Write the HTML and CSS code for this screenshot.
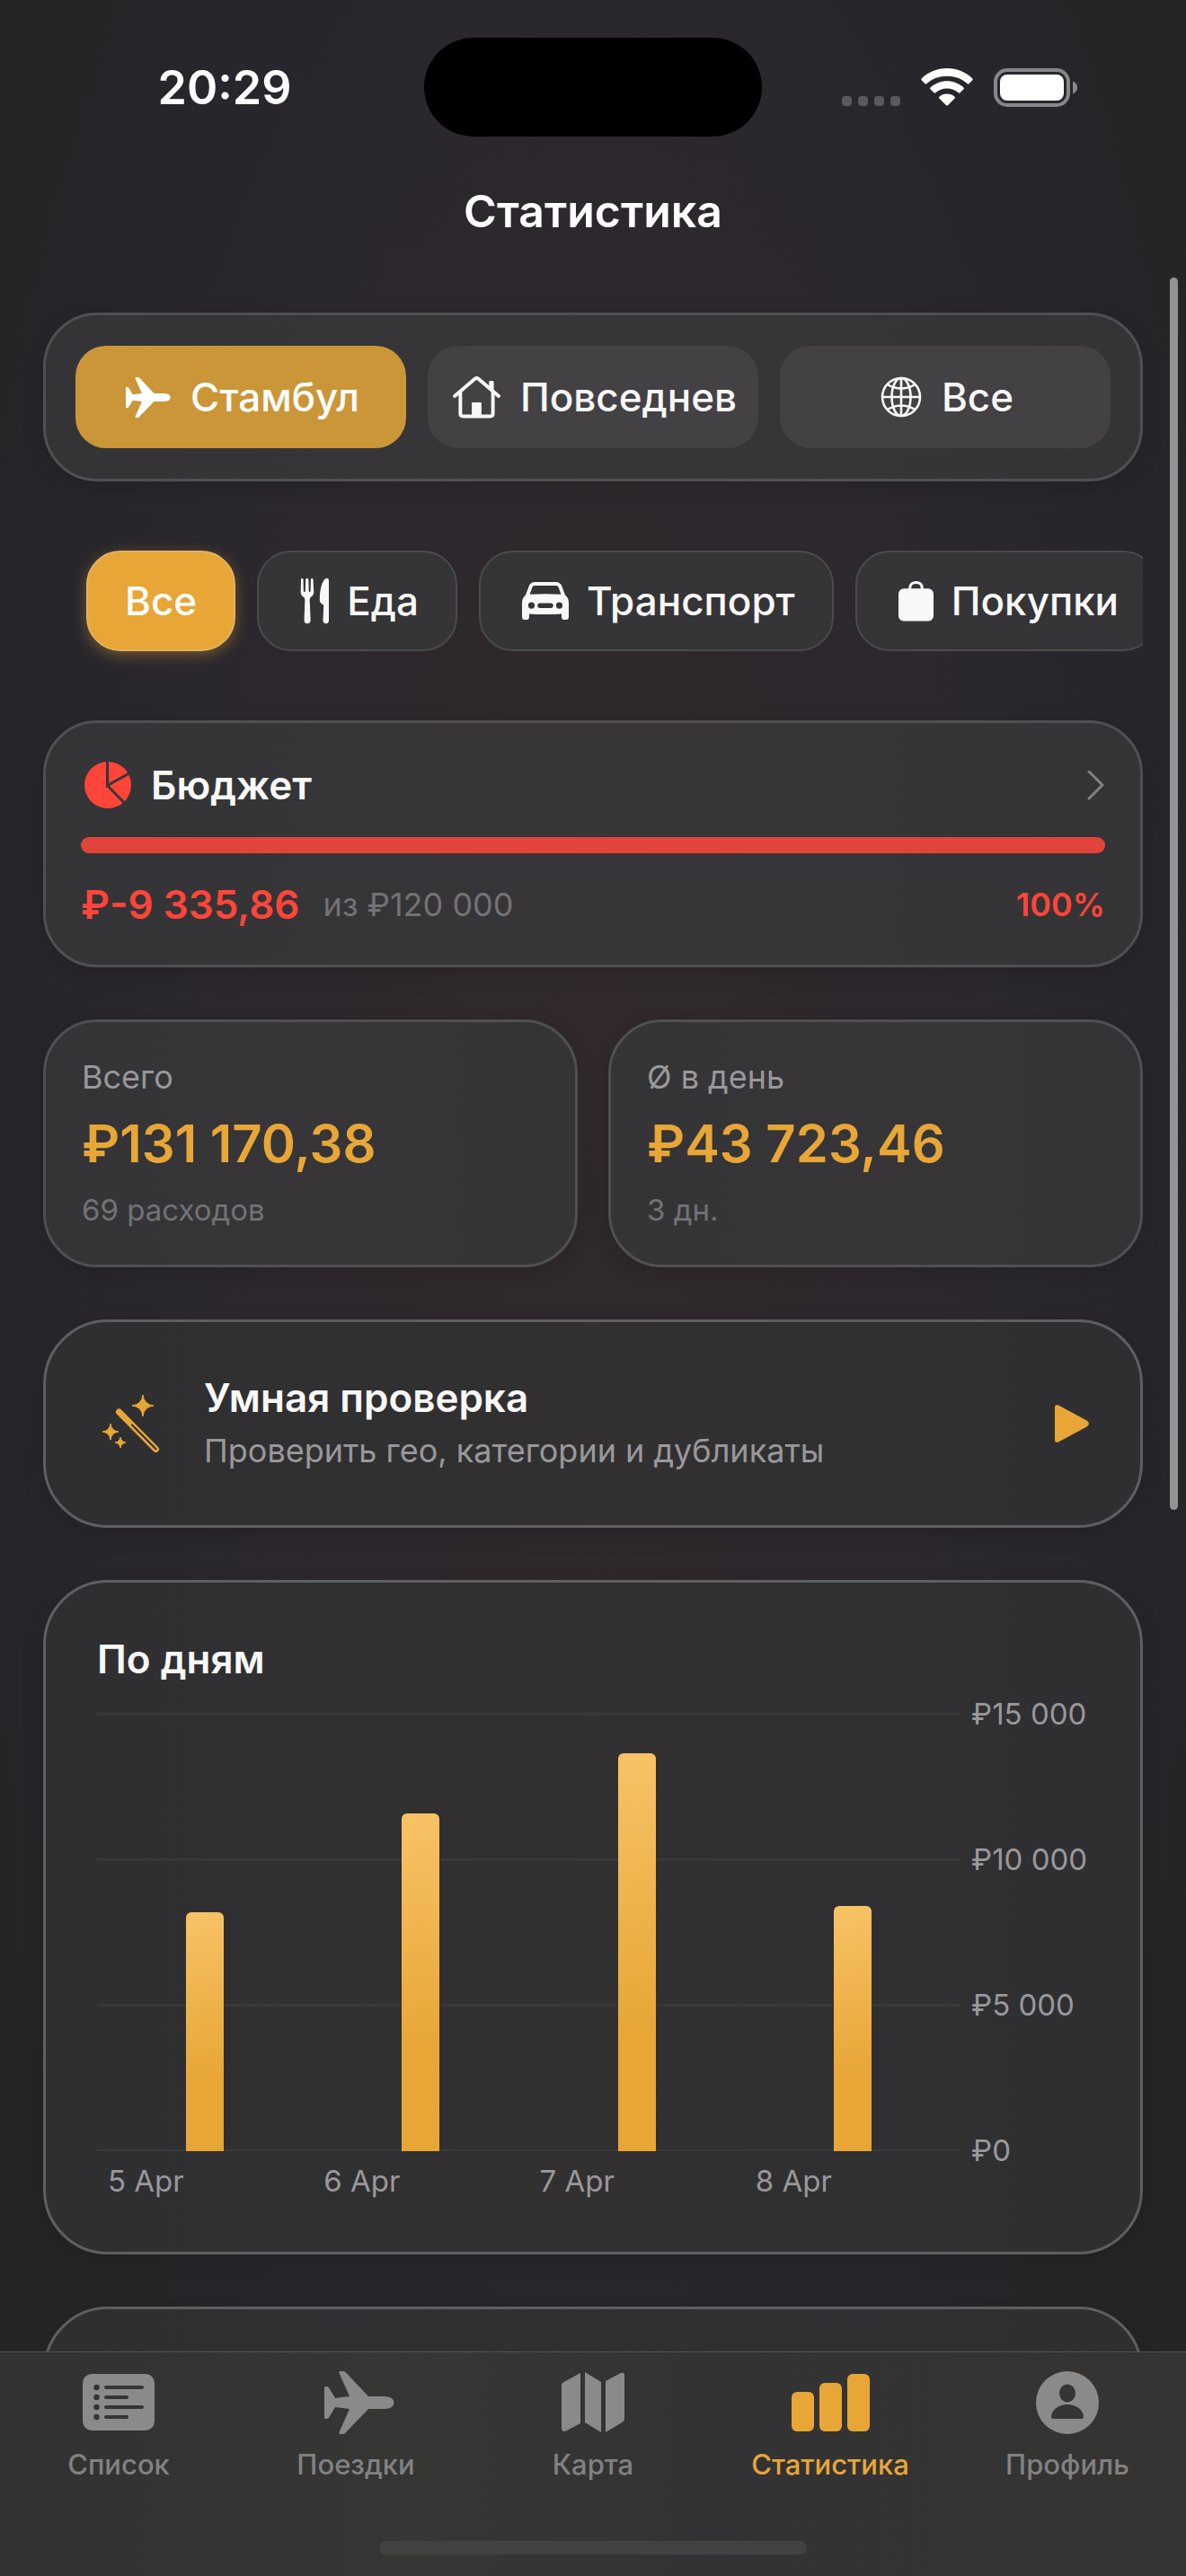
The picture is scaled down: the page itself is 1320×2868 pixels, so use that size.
FILE: index.html
```
<!DOCTYPE html>
<html lang="ru">
<head>
  <meta charset="UTF-8">
  <meta name="viewport" content="width=device-width, initial-scale=1">
  <title>Статистика</title>
  <link rel="stylesheet" href="styles.css">
</head>
<body>

  <!-- Status bar -->
  <div class="status-bar">
    <span class="time">20:29</span>
    <div class="island"></div>
    <div class="status-icons">
      <svg width="65" height="42" viewBox="0 0 65 42" fill="#5b595d">
        <rect x="0" y="31" width="11" height="11" rx="4"/>
        <rect x="18" y="31" width="11" height="11" rx="4"/>
        <rect x="36" y="31" width="11" height="11" rx="4"/>
        <rect x="54" y="31" width="11" height="11" rx="4"/>
      </svg>
      <svg width="58" height="42" viewBox="0 0 58 42" fill="#fff">
        <path d="M29 0C40 0 50 4.300 57.300 11.400Q58.200 12.300 57.300 13.200L53.400 17.200Q52.600 18 51.700 17.200C45.500 11.500 37.600 8.700 29 8.700S12.500 11.500 6.300 17.200Q5.400 18 4.600 17.200L.7 13.200Q-.2 12.300.7 11.400C8 4.300 18 0 29 0Z"/>
        <path d="M29 14.300C36 14.300 42.500 16.900 47.500 21.500Q48.400 22.400 47.500 23.300L43.500 27.300Q42.700 28.100 41.800 27.300C38.200 24.200 33.700 22.600 29 22.600S19.800 24.200 16.200 27.300Q15.300 28.100 14.500 27.300L10.500 23.300Q9.600 22.400 10.500 21.500C15.500 16.900 22 14.300 29 14.300Z"/>
        <path d="M29 28.500C32.300 28.500 35.300 29.700 37.600 31.700Q38.500 32.500 37.600 33.400L29.900 41.200Q29 42 28.100 41.200L20.400 33.400Q19.500 32.500 20.400 31.700C22.700 29.700 25.700 28.500 29 28.500Z"/>
      </svg>
      <svg width="93" height="43" viewBox="0 0 93 43">
        <rect x="2" y="2" width="81" height="39" rx="13" fill="none" stroke="#87868a" stroke-width="4"/>
        <rect x="7" y="7" width="71" height="29" rx="8" fill="#fff"/>
        <path d="M88 14.500c7 2.500 7 11.500 0 14z" fill="#87868a"/>
      </svg>
    </div>
  </div>

  <header class="nav-title">
    <h1>Статистика</h1>
  </header>

  <main class="content">

    <!-- Trip switcher -->
    <div class="card segments">
      <button type="button" class="segment active">
        <svg width="50" height="45" viewBox="0 0 78 70" fill="currentColor"><use href="#plane"/></svg>
        <span>Стамбул</span>
      </button>
      <button type="button" class="segment">
        <svg width="53" height="47" viewBox="0 0 54 48" fill="none" stroke="currentColor" stroke-width="4" stroke-linecap="round" stroke-linejoin="round">
          <path d="M2 22.500L25 2.800Q27 1.300 29 2.800L52 22.500"/>
          <path d="M8.500 18V42.500Q8.500 45.500 11.500 45.500H42.500Q45.500 45.500 45.500 42.500V18"/>
          <path d="M41 6.500Q41 5 42.500 5H45Q46.500 5 46.500 6.500V17L41 12.500ZM21.500 30.500Q21.500 29.500 22.500 29.500H31.500Q32.500 29.500 32.500 30.500V45H21.500Z" fill="currentColor" stroke="none"/>
        </svg>
        <span>Повседнев</span>
      </button>
      <button type="button" class="segment">
        <svg width="46" height="46" viewBox="0 0 46 46" fill="none" stroke="currentColor" stroke-width="2.600">
          <circle cx="23" cy="23" r="21"/>
          <ellipse cx="23" cy="23" rx="10.500" ry="21"/>
          <path d="M23 2V44M2 23H44M7.500 9Q23 18 38.500 9M7.500 37Q23 28 38.500 37"/>
        </svg>
        <span>Все</span>
      </button>
    </div>

    <!-- Category filter -->
    <div class="chips">
      <button type="button" class="chip active"><span>Все</span></button>
      <button type="button" class="chip">
        <svg width="32" height="52" viewBox="0 0 33 52" fill="currentColor">
          <path d="M1 2Q1-.2 2.300 0 3.600.2 3.700 2L4 14.500Q4 16 5 16T6 14.500L6.300 2Q6.500 0 8 0T9.700 2L10 14.500Q10 16 11 16T12 14.500L12.300 2Q12.400.2 13.700 0 15 0 15 2L15.700 15.500Q16 19 13 21.200 11 22.500 11 24.500L12 48Q12 52 8.300 52T4.700 48L5.500 24.500Q5.500 22.500 3.500 21.200.4 19 .7 15.500Z"/>
          <path d="M30.500 0Q33 0 33 2.500V48.500Q33 52 29.700 52T26.300 48.500L27 31.500Q27 30.500 26 30 22.500 28.500 22.500 25C22.500 13 25 4 29 .6Q29.700 0 30.500 0Z"/>
        </svg>
        <span>Еда</span>
      </button>
      <button type="button" class="chip">
        <svg width="52" height="42" viewBox="0 0 52 42" fill="currentColor" fill-rule="evenodd">
          <path d="M14.500 0H37.500Q42.500 0 44.300 4.500L48 14.500Q52 17.500 52 23V38.500Q52 42 49 42H47Q44 42 44 38.500V35.500Q26 36.500 8 35.500V38.500Q8 42 5 42H3Q0 42 0 38.500V23Q0 17.500 4 14.500L7.700 4.500Q9.500 0 14.500 0ZM14 4Q12 4 11.300 6L8.600 13.800Q26 12.800 43.400 13.800L40.700 6Q40 4 38 4ZM10.500 22.500a3.600 3.600 0 1 0 0 7.200a3.600 3.600 0 1 0 0-7.200ZM41.500 22.500a3.600 3.600 0 1 0 0 7.200a3.600 3.600 0 1 0 0-7.200ZM20 23.500a2.700 2.700 0 0 0 0 5.400H32a2.700 2.700 0 0 0 0-5.400Z"/>
        </svg>
        <span>Транспорт</span>
      </button>
      <button type="button" class="chip">
        <svg width="39" height="46" viewBox="0 0 40 46">
          <rect x="0" y="9" width="40" height="37" rx="6" fill="currentColor"/>
          <path d="M13 11V9Q13 2 20 2T27 9V11" fill="none" stroke="currentColor" stroke-width="3"/>
        </svg>
        <span>Покупки</span>
      </button>
    </div>

    <!-- Budget -->
    <section class="card budget">
      <div class="budget-head">
        <svg width="52" height="52" viewBox="0 0 52 52">
          <circle cx="26" cy="26" r="26" fill="#ff453a"/>
          <path d="M25.500 0V26.500L49 13.500M25.500 26.500L45 46.500" fill="none" stroke="#363538" stroke-width="3"/>
        </svg>
        <h2>Бюджет</h2>
        <svg class="chevron" width="20" height="34" viewBox="0 0 20 34" fill="none" stroke="#828184" stroke-width="3" stroke-linecap="round" stroke-linejoin="round">
          <path d="M2 2L17 17L2 32"/>
        </svg>
      </div>
      <div class="progress"><div class="progress-fill" style="width: 100%"></div></div>
      <div class="budget-foot">
        <strong class="left">₽-9 335,86</strong>
        <span class="total">из ₽120 000</span>
        <strong class="percent">100%</strong>
      </div>
    </section>

    <!-- Totals -->
    <div class="totals">
      <section class="card total-card">
        <p class="label">Всего</p>
        <p class="amount">₽131 170,38</p>
        <p class="note">69 расходов</p>
      </section>
      <section class="card total-card">
        <p class="label">Ø в день</p>
        <p class="amount">₽43 723,46</p>
        <p class="note">3 дн.</p>
      </section>
    </div>

    <!-- Smart check -->
    <button type="button" class="card large smart">
      <svg width="64" height="64" viewBox="0 0 64 64" fill="#e7a636">
        <path d="M45 0Q46.200 10.800 57 12 46.200 13.200 45 24 43.800 13.200 33 12 43.800 10.800 45 0Z" stroke="#e7a636" stroke-linejoin="round"/>
        <path d="M9 32Q10 40 18 41 10 42 9 50 8 42 0 41 8 40 9 32Z" stroke="#e7a636" stroke-linejoin="round"/>
        <path d="M20 47Q20.800 52.200 26 53 20.800 53.800 20 59 19.200 53.800 14 53 19.200 52.200 20 47Z" stroke="#e7a636"/>
        <path d="M18.500 19L59.500 60.500" stroke="#e7a636" stroke-width="7" stroke-linecap="round"/>
        <path d="M33 33.500L59.500 60.300" stroke="#302f31" stroke-width="2" stroke-linecap="round"/>
      </svg>
      <span class="smart-text">
        <span class="smart-title">Умная проверка</span>
        <span class="smart-sub">Проверить гео, категории и дубликаты</span>
      </span>
      <svg width="38" height="42" viewBox="0 0 38 42" fill="#e7a636">
        <path d="M0 3Q0-1 4 .6L35.500 17.500Q40.500 21 35.500 24.500L4 41.400Q0 43 0 39Z"/>
      </svg>
    </button>

    <!-- Daily chart -->
    <section class="card large chart-card">
      <h2>По дням</h2>
      <div class="chart">
        <div class="plot">
          <div class="day"><div class="bar" style="height: 54.500%"></div></div>
          <div class="day"><div class="bar" style="height: 77%"></div></div>
          <div class="day"><div class="bar" style="height: 90.700%"></div></div>
          <div class="day"><div class="bar" style="height: 56%"></div></div>
        </div>
        <div class="y-axis">
          <span>₽15 000</span>
          <span>₽10 000</span>
          <span>₽5 000</span>
          <span>₽0</span>
        </div>
        <div class="x-axis">
          <span>5 Apr</span>
          <span>6 Apr</span>
          <span>7 Apr</span>
          <span>8 Apr</span>
        </div>
      </div>
    </section>

    <section class="card large next-card"></section>

    <div class="scroll-thumb"></div>
  </main>

  <!-- Tab bar -->
  <nav class="tab-bar">
    <a href="#list" class="tab">
      <svg width="80" height="70" viewBox="0 0 80 70">
        <rect x="0" y="3" width="80" height="63" rx="10" fill="currentColor"/>
        <g stroke="#363434" stroke-width="4" stroke-linecap="round">
          <path d="M26 18H66M26 29H49M26 40H66M26 51H49"/>
          <path d="M15.500 18V18.100M15.500 29V29.100M15.500 40V40.100M15.500 51V51.100" stroke-width="6.500"/>
        </g>
      </svg>
      <span>Список</span>
    </a>
    <a href="#trips" class="tab">
      <svg width="86" height="70" viewBox="-8 0 86 70" fill="currentColor">
        <path id="plane" d="M17 0H21Q23 0 24.500 2L49 28H67Q77.500 28.500 77.500 35T67 42H49L24.500 67.500Q23 70 21 70H17.500Q16 70 16.500 68L28 42L12 40L5.500 51Q4.500 53 2.500 53H1Q0 53 0 51.500V18.500Q0 17 1 17H2.500Q4.500 17 5.500 19L12 30L28 28L16.500 2Q16 0 17 0Z"/>
      </svg>
      <span>Поездки</span>
    </a>
    <a href="#map" class="tab">
      <svg width="72" height="70" viewBox="0 0 72 70" fill="currentColor">
        <path d="M22 2V58L6 66.500Q1 68 1 63.500V16Q1 13.500 3.500 12Z"/>
        <path d="M27 1L45 12V68L27 57Z"/>
        <path d="M50 11L66 2.500Q71 0 71 5V53Q71 55 69 56.500L50 68Z"/>
      </svg>
      <span>Карта</span>
    </a>
    <a href="#stats" class="tab active">
      <svg width="87" height="70" viewBox="0 0 87 70" fill="currentColor">
        <rect x="0" y="23" width="25" height="44" rx="6"/>
        <rect x="31" y="13" width="25" height="54" rx="6"/>
        <rect x="62" y="3" width="25" height="64" rx="6"/>
      </svg>
      <span>Статистика</span>
    </a>
    <a href="#profile" class="tab">
      <svg width="70" height="70" viewBox="0 0 70 70">
        <circle cx="35" cy="35" r="35" fill="currentColor"/>
        <ellipse cx="35" cy="24.500" rx="9" ry="10" fill="#363434"/>
        <path d="M19.500 53Q17 53 17 51C17 43.500 25 37 35 37S53 43.500 53 51Q53 53 50.500 53Z" fill="#363434"/>
      </svg>
      <span>Профиль</span>
    </a>
    <div class="home-indicator"></div>
  </nav>

</body>
</html>
```
FILE: styles.css
```
* {
  box-sizing: border-box;
}

body {
  margin: 0;
  height: 100vh;
  display: flex;
  flex-direction: column;
  font-family: Inter, "Liberation Sans", sans-serif;
  color: #f8f8f8;
  background: radial-gradient(ellipse 58% 66% at 50% 42%, #31292c 0%, #2d282e 45%, #27262c 82%, #252426 100%);
}

h1, h2, p {
  margin: 0;
}

button {
  font-family: inherit;
  color: inherit;
  border: none;
  cursor: pointer;
}

svg {
  flex: none;
}

/* Status bar */
.status-bar {
  display: grid;
  grid-template-columns: 1fr 376px 1fr;
  align-items: center;
  padding-top: 42px;
}

.time {
  padding-left: 28px;
  text-align: center;
  font-size: 52px;
  font-weight: 600;
  color: #fff;
}

.island {
  height: 110px;
  border-radius: 55px;
  background: #000;
}

.status-icons {
  display: flex;
  justify-content: center;
  gap: 23px;
  padding-right: 32px;
}

.nav-title {
  padding: 50px 0 41px;
  text-align: center;
}

h1 {
  font-size: 50px;
  line-height: 66px;
  font-weight: 600;
  color: #fff;
}

/* Content */
.content {
  position: relative;
  flex: 1;
  min-height: 0;
  overflow: hidden;
  display: flex;
  flex-direction: column;
  gap: 58px;
  padding: 39px 48px 0;
}

.content > * {
  flex: none;
}

.card {
  border: 3px solid #504f52;
  border-radius: 60px;
  background: linear-gradient(90deg, #343436, #373538 50%, #343436);
  box-shadow: 0 6px 24px rgba(0, 0, 0, 0.15);
}

.card.large {
  border-color: #5f5e61;
  border-radius: 72px;
  background: linear-gradient(90deg, #2f2f31, #323031 50%, #2f2f31);
}

h2 {
  font-size: 44px;
  line-height: 56px;
  font-weight: 600;
}

.segments {
  display: grid;
  grid-template-columns: repeat(3, 1fr);
  gap: 24px;
  padding: 34px 33px;
}

.segment {
  display: flex;
  align-items: center;
  justify-content: center;
  gap: 22px;
  height: 114px;
  padding: 0 0 0 4px;
  border-radius: 34px;
  background: #434144;
  font-size: 44px;
  font-weight: 500;
}

.segment.active {
  background: #cb9638;
  color: #fff;
}

.chips {
  display: flex;
  align-items: center;
  gap: 24px;
  padding: 19px 48px;
  overflow: hidden;
}

.chip {
  display: flex;
  align-items: center;
  gap: 20px;
  flex: none;
  height: 112px;
  padding: 0 41px;
  border: 2px solid #4b4a4d;
  border-radius: 38px;
  background: #353436;
  font-size: 44px;
  font-weight: 500;
}

.chip svg {
  margin-left: 5px;
}

.chip.active {
  border-color: #e3b361;
  background: #e7a636;
  color: #fff;
  box-shadow: 0 4px 16px rgba(231, 166, 54, 0.4);
}

/* Budget */
.budget {
  padding: 41px 39px 40px;
}

.budget-head {
  display: flex;
  align-items: center;
  gap: 22px;
  padding-left: 4px;
}

.chevron {
  margin-left: auto;
}

.progress {
  height: 18px;
  margin: 30px 0;
  border-radius: 9px;
  background: #48474a;
}

.progress-fill {
  height: 100%;
  border-radius: 9px;
  background: #e2443b;
}

.budget-foot {
  display: flex;
  align-items: center;
  gap: 26px;
  line-height: 54px;
}

.left {
  font-size: 44px;
  font-weight: 600;
  color: #ff453a;
}

.total {
  font-size: 36px;
  color: #737275;
}

.percent {
  margin-left: auto;
  font-size: 36px;
  font-weight: 600;
  color: #ff453a;
}

/* Totals */
.totals {
  display: grid;
  grid-template-columns: 1fr 1fr;
  gap: 34px;
}

.total-card {
  padding: 39px 40px;
}

.label {
  font-size: 36px;
  line-height: 44px;
  color: #99989b;
}

.amount {
  margin: 8px 0;
  font-size: 58px;
  line-height: 88px;
  font-weight: 600;
  color: #e7a636;
}

.note {
  font-size: 33px;
  line-height: 44px;
  color: #737275;
}

/* Smart check */
.smart {
  display: flex;
  align-items: center;
  gap: 49px;
  padding: 54px 57px 54px 63px;
  text-align: left;
}

.smart-text {
  flex: 1;
  display: flex;
  flex-direction: column;
}

.smart-title {
  font-size: 44px;
  line-height: 60px;
  font-weight: 600;
}

.smart-sub {
  font-size: 36px;
  line-height: 58px;
  color: #99989b;
}

/* Daily chart */
.chart-card {
  padding: 57px 57px 52px;
}

.chart {
  display: grid;
  grid-template-columns: 1fr 131px;
  column-gap: 12px;
  padding-top: 32px;
}

.plot {
  display: grid;
  grid-template-columns: repeat(4, 1fr);
  height: 488px;
  background: repeating-linear-gradient(#39383a 0 3px, transparent 3px 162px);
}

.day {
  display: flex;
  align-items: flex-end;
  justify-content: center;
}

.bar {
  width: 42px;
  border-radius: 6px 6px 0 0;
  background: linear-gradient(170deg, #f8c266, #e7a636 70%);
}

.y-axis {
  display: flex;
  flex-direction: column;
  justify-content: space-between;
  margin: -20px 0;
  font-size: 33px;
  line-height: 42px;
  color: #99989b;
  white-space: nowrap;
}

.x-axis {
  display: grid;
  grid-template-columns: repeat(4, 1fr);
  padding: 12px 0 6px 12px;
  margin-right: -12px;
  font-size: 33px;
  line-height: 42px;
  color: #99989b;
}

.next-card {
  height: 300px;
}

/* Scroll indicator lies over the content */
.scroll-thumb {
  position: absolute;
  top: 0;
  right: 9px;
  width: 9px;
  height: 59.4%;
  border-radius: 5px;
  background: #939294;
}

/* Tab bar */
.tab-bar {
  display: grid;
  grid-template-columns: repeat(5, 1fr);
  padding: 21px 0 24px;
  border-top: 1px solid #525153;
  background: linear-gradient(90deg, #333232, #363635 35%, #333335 60%, #353432);
}

.tab {
  display: flex;
  flex-direction: column;
  align-items: center;
  gap: 14px;
  color: #8b8a8b;
  font-size: 31px;
  line-height: 40px;
  font-weight: 500;
  text-decoration: none;
}

.tab span {
  opacity: 0.9;
}

.tab.active {
  color: #e7a636;
}

.tab.active span {
  opacity: 1;
}

.home-indicator {
  grid-column: 1 / -1;
  justify-self: center;
  width: 36%;
  height: 15px;
  margin-top: 65px;
  border-radius: 8px;
  background: #424242;
}
```
